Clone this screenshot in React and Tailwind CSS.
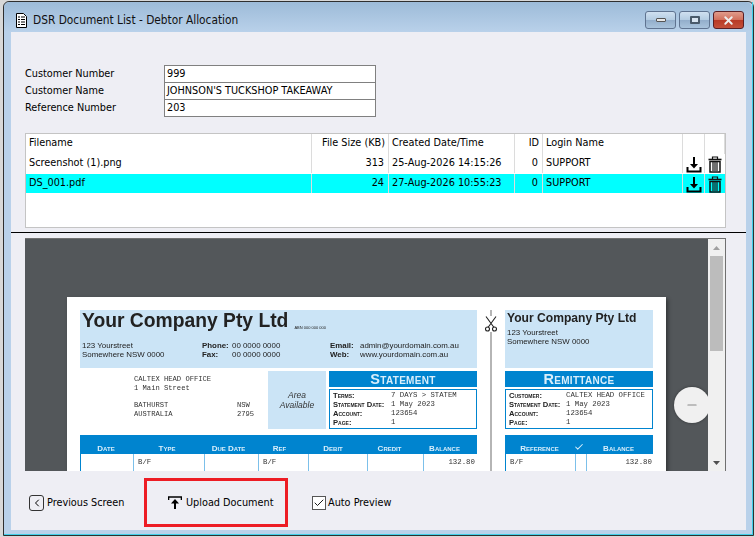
import { Check, Minus, X, ChevronLeft } from 'lucide-react';

const uiFont = "font-['DejaVu_Sans_Condensed','DejaVu_Sans',sans-serif]";
const docMono = "font-['Liberation_Mono',monospace]";
const docSans = "font-['Liberation_Sans',Arial,sans-serif]";

const fields = [
  ['Customer Number', '999'],
  ['Customer Name', "JOHNSON'S TUCKSHOP TAKEAWAY"],
  ['Reference Number', '203'],
];

const files = [
  { name: 'Screenshot (1).png', size: 313, created: '25-Aug-2026 14:15:26', id: 0, login: 'SUPPORT' },
  { name: 'DS_001.pdf', size: 24, created: '27-Aug-2026 10:55:23', id: 0, login: 'SUPPORT', selected: true },
];

const columns = 'grid grid-cols-[286px_77px_126px_28px_140px_22px_20px]';

const DownloadIcon = () => (
  <svg width="16" height="17" viewBox="0 0 16 17" fill="none" stroke="#000">
    <path d="M8 1v9" strokeWidth="2" />
    <path d="M4 8h8l-4 4.5z" fill="#000" stroke="none" />
    <path d="M1.5 11v4.5h13V11" strokeWidth="2" />
  </svg>
);

const TrashIcon = () => (
  <svg width="14" height="17" viewBox="0 0 14 17" fill="none" stroke="#111">
    <path d="M0.5 3.5h13" strokeWidth="1.6" />
    <path d="M4.5 3V1h5v2" strokeWidth="1.2" />
    <path d="M2 5.5h10v10.5H2z" strokeWidth="1.5" />
    <path d="M5 6v9M7 6v9M9 6v9" strokeWidth="1.2" />
  </svg>
);

const UploadIcon = () => (
  <svg width="14" height="14" viewBox="0 0 14 14" fill="none" stroke="#000">
    <path d="M0.5 4V1h13v3" strokeWidth="1.6" />
    <path d="M7 13V6" strokeWidth="2" />
    <path d="M3 7.5h8L7 3z" fill="#000" stroke="none" />
  </svg>
);

const DocIcon = () => (
  <svg width="13" height="15" viewBox="0 0 13 15" fill="#fff" stroke="#000">
    <path d="M1.5 0.5h7l3 3v11h-10z" />
    <path d="M3 4h2M6 4h4M3 6.5h2M6 6.5h4M3 9h2M6 9h4M3 11.5h2M6 11.5h4" strokeWidth="1.2" />
  </svg>
);

const WinButton = ({ className, children }) => (
  <div className={`flex h-[18px] w-[31px] items-center justify-center rounded-[3px] border ${className}`}>
    {children}
  </div>
);

const Scissors = () => (
  <svg width="12" height="16" viewBox="0 0 12 16" fill="none" stroke="#222" strokeWidth="1.1">
    <path d="M1 0.5l8 11M11 0.5l-8 11" />
    <circle cx="2.5" cy="13" r="2" />
    <circle cx="9.5" cy="13" r="2" />
  </svg>
);

const DocTable = ({ cols, head, cells }) => (
  <div className={`${docSans} bg-[#0084cf]`}>
    <div className="grid h-[19px] items-end pb-[1px] text-center text-[8px] font-bold text-[#d8eefb] [font-variant:small-caps]" style={{ gridTemplateColumns: cols }}>
      {head.map((h, i) => <div key={i}>{h}</div>)}
    </div>
    <div className="grid h-[30px] gap-x-[1px] border-x border-[#0084cf] bg-[#7cc0ea]" style={{ gridTemplateColumns: cols }}>
      {cells.map((c, i) => (
        <div key={i} className={`bg-white px-[4px] pt-[5px] text-[7.4px] text-[#333] ${docMono} ${c === '132.80' ? 'text-right' : ''}`}>{c}</div>
      ))}
    </div>
  </div>
);

const InfoRow = ({ label, value, w }) => (
  <div className="flex h-[9px] items-center">
    <span className={`${docSans} text-[7.6px] font-bold text-[#222] [font-variant:small-caps]`} style={{ width: w }}>{label}</span>
    <span className={`${docMono} text-[7.3px] text-[#333]`}>{value}</span>
  </div>
);

const Paper = () => (
  <div className="ml-[42px] flex h-[300px] w-[599px] gap-[13px] bg-white pl-[13px] pt-[13px] shadow-[2px_2px_4px_rgba(0,0,0,0.4)] blur-[0.25px]">
    <div className="w-[397px]">
      <div className={`${docSans} h-[58px] bg-[#cbe4f6] px-[2px] text-[#222]`}>
        <div className="flex h-[22px] items-end gap-[6px]">
          <span className="text-[19.3px] font-bold leading-[22px]">Your Company Pty Ltd</span>
          <span className="pb-[1px] text-[4px] leading-[6px]">ABN 000 000 000</span>
        </div>
        <div className="mt-[9px] flex text-[7.9px] leading-[9px]">
          <div className="w-[120px]">
            <div>123 Yourstreet</div>
            <div>Somewhere NSW 0000</div>
          </div>
          <div className="w-[30px] font-bold">
            <div>Phone:</div>
            <div>Fax:</div>
          </div>
          <div className="w-[98px]">
            <div>00 0000 0000</div>
            <div>00 0000 0000</div>
          </div>
          <div className="w-[30px] font-bold">
            <div>Email:</div>
            <div>Web:</div>
          </div>
          <div>
            <div>admin@yourdomain.com.au</div>
            <div>www.yourdomain.com.au</div>
          </div>
        </div>
      </div>
      <div className="mt-[3px] flex h-[58px]">
        <div className={`${docMono} w-[188px] pl-[54px] pt-[4px] text-[7.15px] leading-[8.5px] text-[#333]`}>
          <div>CALTEX HEAD OFFICE</div>
          <div>1 Main Street</div>
          <div className="mt-[8.5px] flex"><span className="w-[103px]">BATHURST</span><span>NSW</span></div>
          <div className="mt-[1px] flex"><span className="w-[103px]">AUSTRALIA</span><span>2795</span></div>
        </div>
        <div className={`${docSans} flex w-[58px] items-center justify-center bg-[#cbe4f6] text-center text-[8.5px] italic leading-[10px] text-[#333]`}>
          Area<br />Available
        </div>
        <div className="ml-[3px] w-[148px]">
          <div className={`${docSans} flex h-[16px] items-center justify-center bg-[#0084cf] text-[14.5px] font-bold tracking-[0.3px] text-[#d8eefb] [font-variant:small-caps]`}>
            Statement
          </div>
          <div className="mt-[2px] h-[40px] border border-[#0084cf] pl-[3px] pt-[1px]">
            <InfoRow label="Terms:" value="7 DAYS > STATEM" w={58} />
            <InfoRow label="Statement Date:" value="1 May 2023" w={58} />
            <InfoRow label="Account:" value="123654" w={58} />
            <InfoRow label="Page:" value="1" w={58} />
          </div>
        </div>
      </div>
      <div className="mt-[6px]">
        <DocTable
          cols="52px 70px 53px 49px 58px 55px 55px"
          head={['Date', 'Type', 'Due Date', 'Ref', 'Debit', 'Credit', 'Balance']}
          cells={['', 'B/F', '', 'B/F', '', '', '132.80']}
        />
      </div>
    </div>
    <div className="flex w-[2px] flex-col">
      <div className="relative h-full w-[2px] bg-[#b5b5b5]">
        <div className="absolute left-[-5px] top-[6px] bg-white"><Scissors /></div>
      </div>
    </div>
    <div className="w-[148px]">
      <div className={`${docSans} h-[58px] bg-[#cbe4f6] px-[2px] text-[#222]`}>
        <div className="text-[12.1px] font-bold leading-[16px]">Your Company Pty Ltd</div>
        <div className="mt-[2px] text-[7.9px] leading-[9px]">
          <div>123 Yourstreet</div>
          <div>Somewhere NSW 0000</div>
        </div>
      </div>
      <div className={`${docSans} mt-[3px] flex h-[16px] items-center justify-center bg-[#0084cf] text-[14.5px] font-bold tracking-[0.3px] text-[#d8eefb] [font-variant:small-caps]`}>
        Remittance
      </div>
      <div className="mt-[2px] h-[40px] border border-[#0084cf] pl-[3px] pt-[1px]">
        <InfoRow label="Customer:" value="CALTEX HEAD OFFICE" w={57} />
        <InfoRow label="Statement Date:" value="1 May 2023" w={57} />
        <InfoRow label="Account:" value="123654" w={57} />
        <InfoRow label="Page:" value="1" w={57} />
      </div>
      <div className="mt-[6px]">
        <DocTable
          cols="69px 10px 69px"
          head={['Reference', <Check key="c" size={10} strokeWidth={2.5} className="mx-auto mb-[1px] text-[#d8eefb]" />, 'Balance']}
          cells={['B/F', '', '132.80']}
        />
      </div>
    </div>
  </div>
);

const Preview = () => (
  <div className="relative mx-[14px] flex h-[233px] w-[701px] overflow-hidden border-r border-t border-[#707070] bg-[#53575a]">
    <div className="h-full flex-1 overflow-hidden pt-[58px]">
      <Paper />
    </div>
    <div className="absolute left-[649px] top-[148px] flex h-[36px] w-[36px] items-center justify-center rounded-full bg-[#f0f0f0] shadow-[0_0_3px_rgba(0,0,0,0.4)]">
      <Minus size={14} className="text-[#8a8a8a]" strokeWidth={2} />
    </div>
    <div className="z-10 flex h-full w-[17px] flex-col items-center bg-[#f0f0f0]">
      <div className="flex h-[17px] items-center">
        <svg width="7" height="4" viewBox="0 0 7 4" fill="#a0a0a0"><path d="M3.5 0L7 4H0z" /></svg>
      </div>
      <div className="h-[95px] w-[13px] bg-[#bcbcbc]" />
      <div className="flex-1" />
      <div className="flex h-[17px] items-center">
        <svg width="7" height="4" viewBox="0 0 7 4" fill="#505050"><path d="M0 0h7L3.5 4z" /></svg>
      </div>
    </div>
  </div>
);

export default function App() {
  return (
    <div className={`${uiFont} h-[537px] w-[755px] overflow-hidden whitespace-nowrap bg-[#d8d8d8] pl-[3px] pt-[1px] text-[10.8px] leading-none text-black`}>
      <div className="h-[535px] w-[751px] rounded-t-[6px] border border-[#2f2f2f] bg-[#b9d1ea]">
        <div className="h-full w-full border-b border-r border-[#40cfe8] px-[7px]">
          <div className="-mx-[7px] flex h-[30px] items-center rounded-t-[6px] bg-gradient-to-b from-[#9dbbd8] to-[#b9d1ea] pl-[11px] pr-[8px] pt-[6px]">
            <DocIcon />
            <span className="ml-[5px] pt-[1px] text-[11.8px] text-[#111]">DSR Document List - Debtor Allocation</span>
            <div className="ml-auto flex gap-[3px]">
              <WinButton className="border-[#5f7390] bg-[linear-gradient(#cfe0f0_0%,#b4cce2_48%,#93aecb_52%,#a9c3dc_100%)]">
                <div className="h-[4px] w-[10px] rounded-[1px] border border-[#555] bg-[#e8e8e8]" />
              </WinButton>
              <WinButton className="border-[#5f7390] bg-[linear-gradient(#cfe0f0_0%,#b4cce2_48%,#93aecb_52%,#a9c3dc_100%)]">
                <div className="h-[8px] w-[10px] rounded-[1px] border-2 border-[#4a5a6a] bg-[#d8e4f0]" />
              </WinButton>
              <WinButton className="border-[#5a1f24] bg-[linear-gradient(#e09c8c_0%,#d2705c_48%,#b83a26_52%,#c4503a_100%)]">
                <X size={13} strokeWidth={3.5} className="text-[#eee]" />
              </WinButton>
            </div>
          </div>

          <div className="h-[498px] w-[735px] bg-[#eeeef4]">
            <div className="ml-[14px] flex flex-col pt-[33px]">
              {fields.map(([label, value]) => (
                <div key={label} className="flex h-[17px] items-center">
                  <span className="w-[139px] pt-[1px]">{label}</span>
                  <span className="flex h-[18px] w-[212px] items-center border border-[#808080] bg-white px-[2px] pt-[1px]">{value}</span>
                </div>
              ))}
            </div>

            <div className="ml-[14px] mt-[17px] h-[95px] w-[701px] border border-[#c4c4c4] bg-white">
              <div className={`${columns} h-[20px]`}>
                {['Filename', 'File Size (KB)', 'Created Date/Time', 'ID', 'Login Name', '', ''].map((h, i) => (
                  <div key={i} className={`flex items-center border-r border-[#dcdcdc] px-[3px] pb-[2px] ${i === 1 || i === 3 ? 'justify-end' : ''}`}>{h}</div>
                ))}
              </div>
              {files.map((f) => (
                <div key={f.name} className={`${columns} mb-[1px] h-[19px] ${f.selected ? 'bg-[#00ffff]' : 'bg-white'}`}>
                  <div className="flex items-center border-r border-[#dcdcdc] px-[3px] pb-[1px]">{f.name}</div>
                  <div className="flex items-center justify-end border-r border-[#dcdcdc] px-[4px] pb-[1px]">{f.size}</div>
                  <div className="flex items-center border-r border-[#dcdcdc] px-[3px] pb-[1px]">{f.created}</div>
                  <div className="flex items-center justify-end border-r border-[#dcdcdc] px-[4px] pb-[1px]">{f.id}</div>
                  <div className="flex items-center border-r border-[#dcdcdc] px-[3px] pb-[1px]">{f.login}</div>
                  <div className="flex items-center justify-center border-r border-[#dcdcdc] pt-[1px]"><DownloadIcon /></div>
                  <div className="flex items-center justify-center pt-[1px]"><TrashIcon /></div>
                </div>
              ))}
            </div>

            <div className="mt-[4px] h-[1px] w-full bg-black" />
            <div className="mt-[5px]"><Preview /></div>

            <div className="flex h-[55px] items-center pl-[18px] pt-[8px]">
              <div className="flex w-[115px] items-center gap-[3px]">
                <span className="flex h-[16px] w-[15px] items-center justify-center rounded-[3px] border-[1.5px] border-[#333]">
                  <ChevronLeft size={12} strokeWidth={2} />
                </span>
                <span className="pt-[1px]">Previous Screen</span>
              </div>
              <div className="flex h-[49px] w-[144px] items-center border-[3px] border-[#ed1c24] pl-[21px]">
                <UploadIcon />
                <span className="ml-[4px] pt-[1px]">Upload Document</span>
              </div>
              <div className="ml-[24px] flex items-center gap-[2px]">
                <span className="flex h-[14px] w-[14px] items-center justify-center border border-[#555] bg-white">
                  <Check size={12} strokeWidth={1.8} />
                </span>
                <span className="pt-[2px]">Auto Preview</span>
              </div>
            </div>
          </div>
        </div>
      </div>
    </div>
  );
}
